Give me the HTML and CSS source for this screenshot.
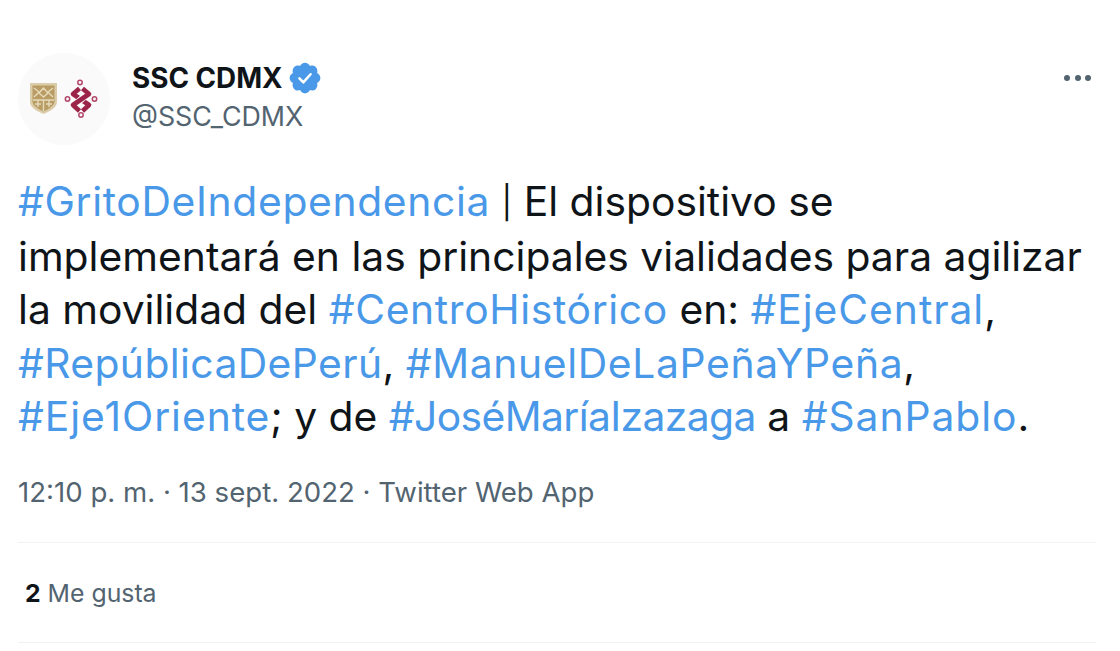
FILE: index.html
```html
<!DOCTYPE html>
<html lang="es">
<head>
    <meta charset="UTF-8">
    <title>SSC CDMX</title>
    <link rel="stylesheet" href="styles.css">
</head>
<body>
<div class="tweet">
    <div class="head">
        <div class="avatar">
            <svg width="92" height="92" viewBox="0 0 92 92">
                <!-- escudo -->
                <path d="M12 30H39V49C39 54 33 58 25.500 61C18 58 12 54 12 49Z" fill="#dccdaa"/>
                <path d="M14.500 32.500H36.500V48.500C36.500 52.500 31 56 25.500 58.500C20 56 14.500 52.500 14.500 48.500Z" fill="#b89c63"/>
                <path d="M16 35L21 39L16 44M35 35L30 39L35 44M25.500 35L21 40L25.500 44L30 40ZM15 47H36M20 47V54M31 47V54M25.500 47V58M17 51H23M28 51H34" stroke="#e6dabb" stroke-width="1.400" fill="none"/>
                <!-- logo -->
                <g fill="none" stroke-width="4.600" stroke-linejoin="round">
                    <path stroke="#9c2449" d="M61.500 35.500L55 41L71 52L64.500 58"/>
                    <path stroke="#fafafa" stroke-width="7" d="M68 42L58 51"/>
                    <path stroke="#9c2449" d="M64.500 35.500L71 41L55 52L61.500 58"/>
                </g>
                <g fill="none" stroke="#b3476a" stroke-width="1.500">
                    <circle cx="62" cy="29.500" r="2.200"/>
                    <circle cx="49.500" cy="46" r="2.200"/>
                    <circle cx="76.500" cy="46" r="2.200"/>
                    <circle cx="63" cy="62" r="2.200"/>
                </g>
            </svg>
        </div>
        <div class="names">
            <div class="name-row">
                <span class="name">SSC CDMX</span>
                <svg class="badge" width="36" height="36" viewBox="0 0 24 24">
                    <path fill="#4a99e9" d="M22.250 12c0-1.430-.880-2.670-2.190-3.340.460-1.390.200-2.900-.810-3.910s-2.520-1.270-3.910-.810c-.660-1.310-1.910-2.190-3.340-2.190s-2.670.880-3.330 2.190c-1.400-.460-2.910-.200-3.920.810s-1.260 2.520-.800 3.910c-1.310.670-2.200 1.910-2.200 3.340s.890 2.670 2.200 3.340c-.460 1.390-.210 2.900.800 3.910s2.520 1.260 3.910.810c.670 1.310 1.910 2.190 3.340 2.190s2.680-.880 3.340-2.190c1.390.450 2.900.200 3.910-.810s1.270-2.520.810-3.910c1.310-.670 2.190-1.910 2.190-3.340z"/>
                    <path fill="none" stroke="#fff" stroke-width="1.700" stroke-linecap="round" stroke-linejoin="round" d="M8.300 12.300l2.600 2.600 4.800-5.400"/>
                </svg>
            </div>
            <div class="handle">@SSC_CDMX</div>
        </div>
        <div class="more"><i></i><i></i><i></i></div>
    </div>

    <div class="text">
        <a>#GritoDeIndependencia</a> <span class="bar">|</span> El dispositivo se<br>
        implementará en las principales vialidades para agilizar<br>
        la movilidad del <a>#CentroHistórico</a> en: <a class="wide">#EjeCentral</a>,<br>
        <a class="tag_r">#RepúblicaDePerú</a>, <a>#ManuelDeLaPeñaYPeña</a>,<br>
        <a class="wide">#Eje1Oriente</a>; y de <a class="narrow">#JoséMaríaIzazaga</a> a <a class="wide">#SanPablo</a>.
    </div>

    <div class="meta">12:10 p. m. · 13 sept. 2022 · Twitter Web App</div>

    <div class="stats"><b>2</b> Me gusta</div>
</div>
</body>
</html>
```

FILE: styles.css
```css
body{
    margin: 0;
    background-color: #fff;
    font-family: "Inter", "Liberation Sans", sans-serif;
    color: #0f1419;
}
.tweet{
    padding: 53px 24px 0 18px;
}
.head{
    display: flex;
    align-items: flex-start;
}
.avatar{
    width: 92px;
    height: 92px;
    border-radius: 50%;
    background-color: #fafafa;
    margin-right: 22px;
}
.avatar svg{
    filter: blur(.4px);
}
.names{
    flex: 1;
    margin-top: 7px;
}
.name-row{
    display: flex;
    align-items: center;
    height: 36px;
}
.name{
    font-size: 27.800px;
    font-weight: 700;
    margin-right: 4px;
}
.handle{
    margin-top: 2px;
    font-size: 26.800px;
    color: #536471;
    line-height: 36px;
}
.more{
    display: flex;
    gap: 4.500px;
    margin-top: 22px;
    margin-right: 5px;
}
.more i{
    width: 6px;
    height: 6px;
    border-radius: 50%;
    background-color: #536471;
}
.text{
    margin-top: 30px;
    font-size: 40.800px;
    line-height: 53.500px;
}
.text a{
    color: #4a99e9;
    letter-spacing: .65px;
}
.text .tag_r{
    letter-spacing: .4px;
}
.text .wide{
    letter-spacing: .95px;
}
.text .narrow{
    letter-spacing: -.6px;
}
.bar{
    font-size: 32px;
    vertical-align: 2px;
}
.meta{
    margin-top: 30px;
    font-size: 27.600px;
    line-height: 36px;
    color: #536471;
}
.stats{
    margin-top: 32px;
    border-top: 1px solid #eff3f4;
    border-bottom: 1px solid #eff3f4;
    padding: 32px 7px 31px;
    font-size: 24.800px;
    line-height: 36px;
    color: #536471;
}
.stats b{
    color: #0f1419;
}
```
